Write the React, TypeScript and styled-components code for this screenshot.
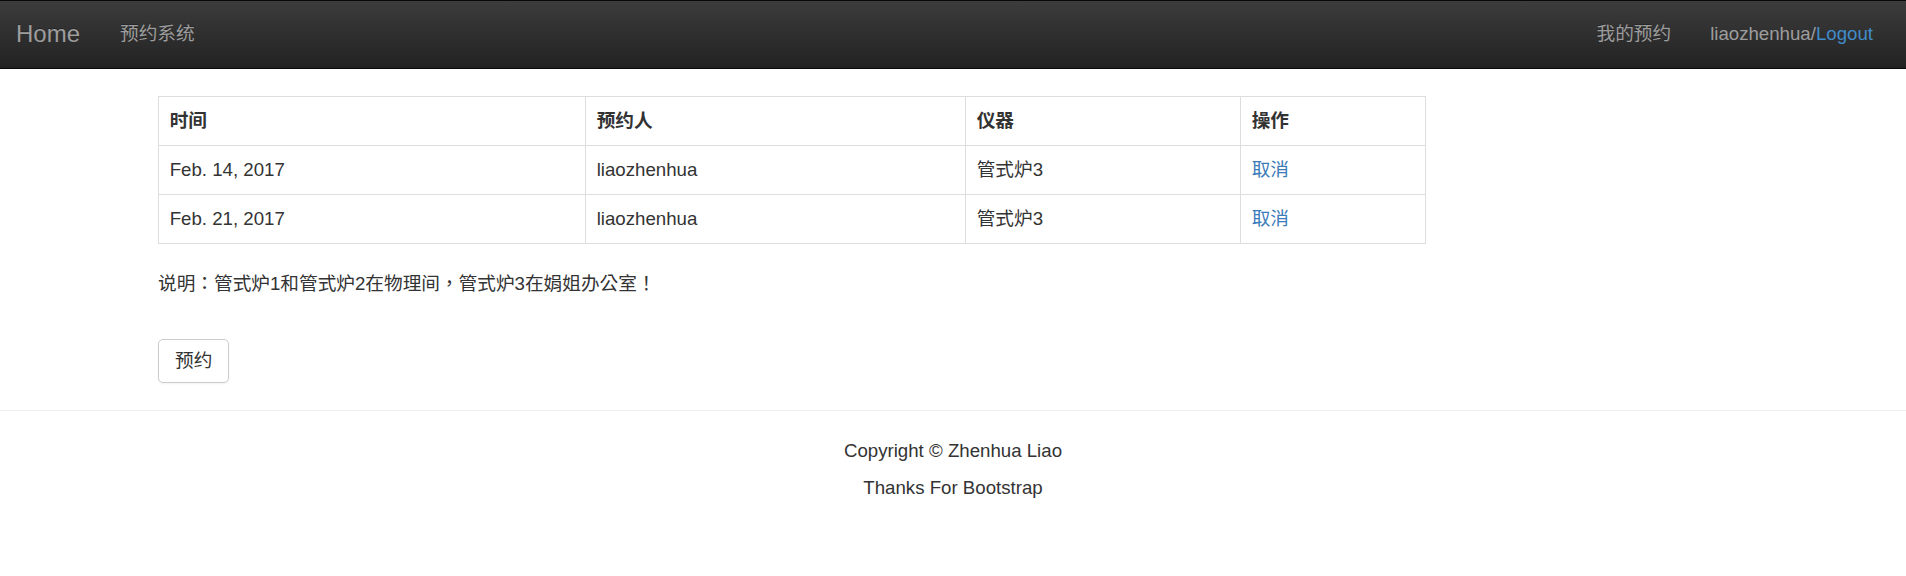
import React from 'react';
import styled, { createGlobalStyle } from 'styled-components';

const GlobalStyle = createGlobalStyle`
  html, body {
    margin: 0;
    padding: 0;
    background: #fff;
  }
  body {
    font-family: "Liberation Sans", Arial, "Noto Sans CJK SC", sans-serif;
    font-size: 18.67px;
    line-height: 26.67px;
    color: #333;
  }
  * {
    box-sizing: border-box;
  }
`;

const NavBar = styled.nav`
  height: 69px;
  display: flex;
  align-items: center;
  justify-content: space-between;
  background: linear-gradient(to bottom, #3c3c3c 0%, #222 100%);
  border-top: 1px solid #080808;
  border-bottom: 1px solid #080808;
`;

const NavGroup = styled.div<{ $right?: boolean }>`
  display: flex;
  align-items: center;
  height: 100%;
  padding-left: ${(p) => (p.$right ? '0' : '16px')};
  padding-right: ${(p) => (p.$right ? '33px' : '0')};
`;

const Brand = styled.a`
  font-size: 24px;
  color: #9d9d9d;
  text-decoration: none;
  padding-right: 20px;
  text-shadow: 0 -1px 0 rgba(0, 0, 0, 0.25);
`;

const NavLink = styled.a`
  color: #9d9d9d;
  text-decoration: none;
  padding: 0 20px;
  text-shadow: 0 -1px 0 rgba(0, 0, 0, 0.25);
`;

const NavText = styled.span`
  color: #9d9d9d;
  margin-left: 19px;

  a {
    color: #428bca;
    text-decoration: none;
  }
`;

const Main = styled.main`
  padding: 27px 0 0 158px;
`;

const Table = styled.table`
  width: 1267px;
  table-layout: fixed;
  border-collapse: collapse;
  border: 1px solid #ddd;
  margin-bottom: 27px;
`;

const HeadCell = styled.th<{ $w: number }>`
  width: ${(p) => p.$w}px;
  text-align: left;
  font-weight: bold;
  padding: 10.67px;
  border: 1px solid #ddd;
`;

const Cell = styled.td`
  padding: 10.67px;
  border: 1px solid #ddd;
`;

const CancelLink = styled.a`
  color: #3a7bb8;
  text-decoration: none;
`;

const Note = styled.p`
  margin: 0 0 41px;
  font-family: "Liberation Sans", Arial, "Noto Sans CJK TC", sans-serif;
`;

const Button = styled.button`
  font-family: inherit;
  font-size: 18.67px;
  line-height: 26.67px;
  color: #333;
  background: #fff;
  border: 1px solid #ccc;
  border-radius: 5px;
  padding: 8px 16px;
  box-shadow: 0 1px 2px rgba(0, 0, 0, 0.05);
`;

const Divider = styled.hr`
  margin: 27px 0 0;
  border: 0;
  border-top: 1px solid #eee;
`;

const Footer = styled.footer`
  text-align: center;
  padding-top: 27px;

  p {
    margin: 0 0 10px;
  }
`;

const bookings = [
  { date: 'Feb. 14, 2017', user: 'liaozhenhua', device: '管式炉3' },
  { date: 'Feb. 21, 2017', user: 'liaozhenhua', device: '管式炉3' },
];

const App: React.FC = () => {
  return (
    <>
      <GlobalStyle />
      <NavBar>
        <NavGroup>
          <Brand href="#">Home</Brand>
          <NavLink href="#">预约系统</NavLink>
        </NavGroup>
        <NavGroup $right>
          <NavLink href="#">我的预约</NavLink>
          <NavText>
            liaozhenhua/<a href="#">Logout</a>
          </NavText>
        </NavGroup>
      </NavBar>

      <Main>
        <Table>
          <thead>
            <tr>
              <HeadCell $w={427}>时间</HeadCell>
              <HeadCell $w={380}>预约人</HeadCell>
              <HeadCell $w={275}>仪器</HeadCell>
              <HeadCell $w={185}>操作</HeadCell>
            </tr>
          </thead>
          <tbody>
            {bookings.map((b, idx) => (
              <tr key={idx}>
                <Cell>{b.date}</Cell>
                <Cell>{b.user}</Cell>
                <Cell>{b.device}</Cell>
                <Cell>
                  <CancelLink href="#">取消</CancelLink>
                </Cell>
              </tr>
            ))}
          </tbody>
        </Table>

        <Note>说明：管式炉1和管式炉2在物理间，管式炉3在娟姐办公室！</Note>

        <Button type="button">预约</Button>
      </Main>

      <Divider />

      <Footer>
        <p>Copyright © Zhenhua Liao</p>
        <p>Thanks For Bootstrap</p>
      </Footer>
    </>
  );
};

export default App;
